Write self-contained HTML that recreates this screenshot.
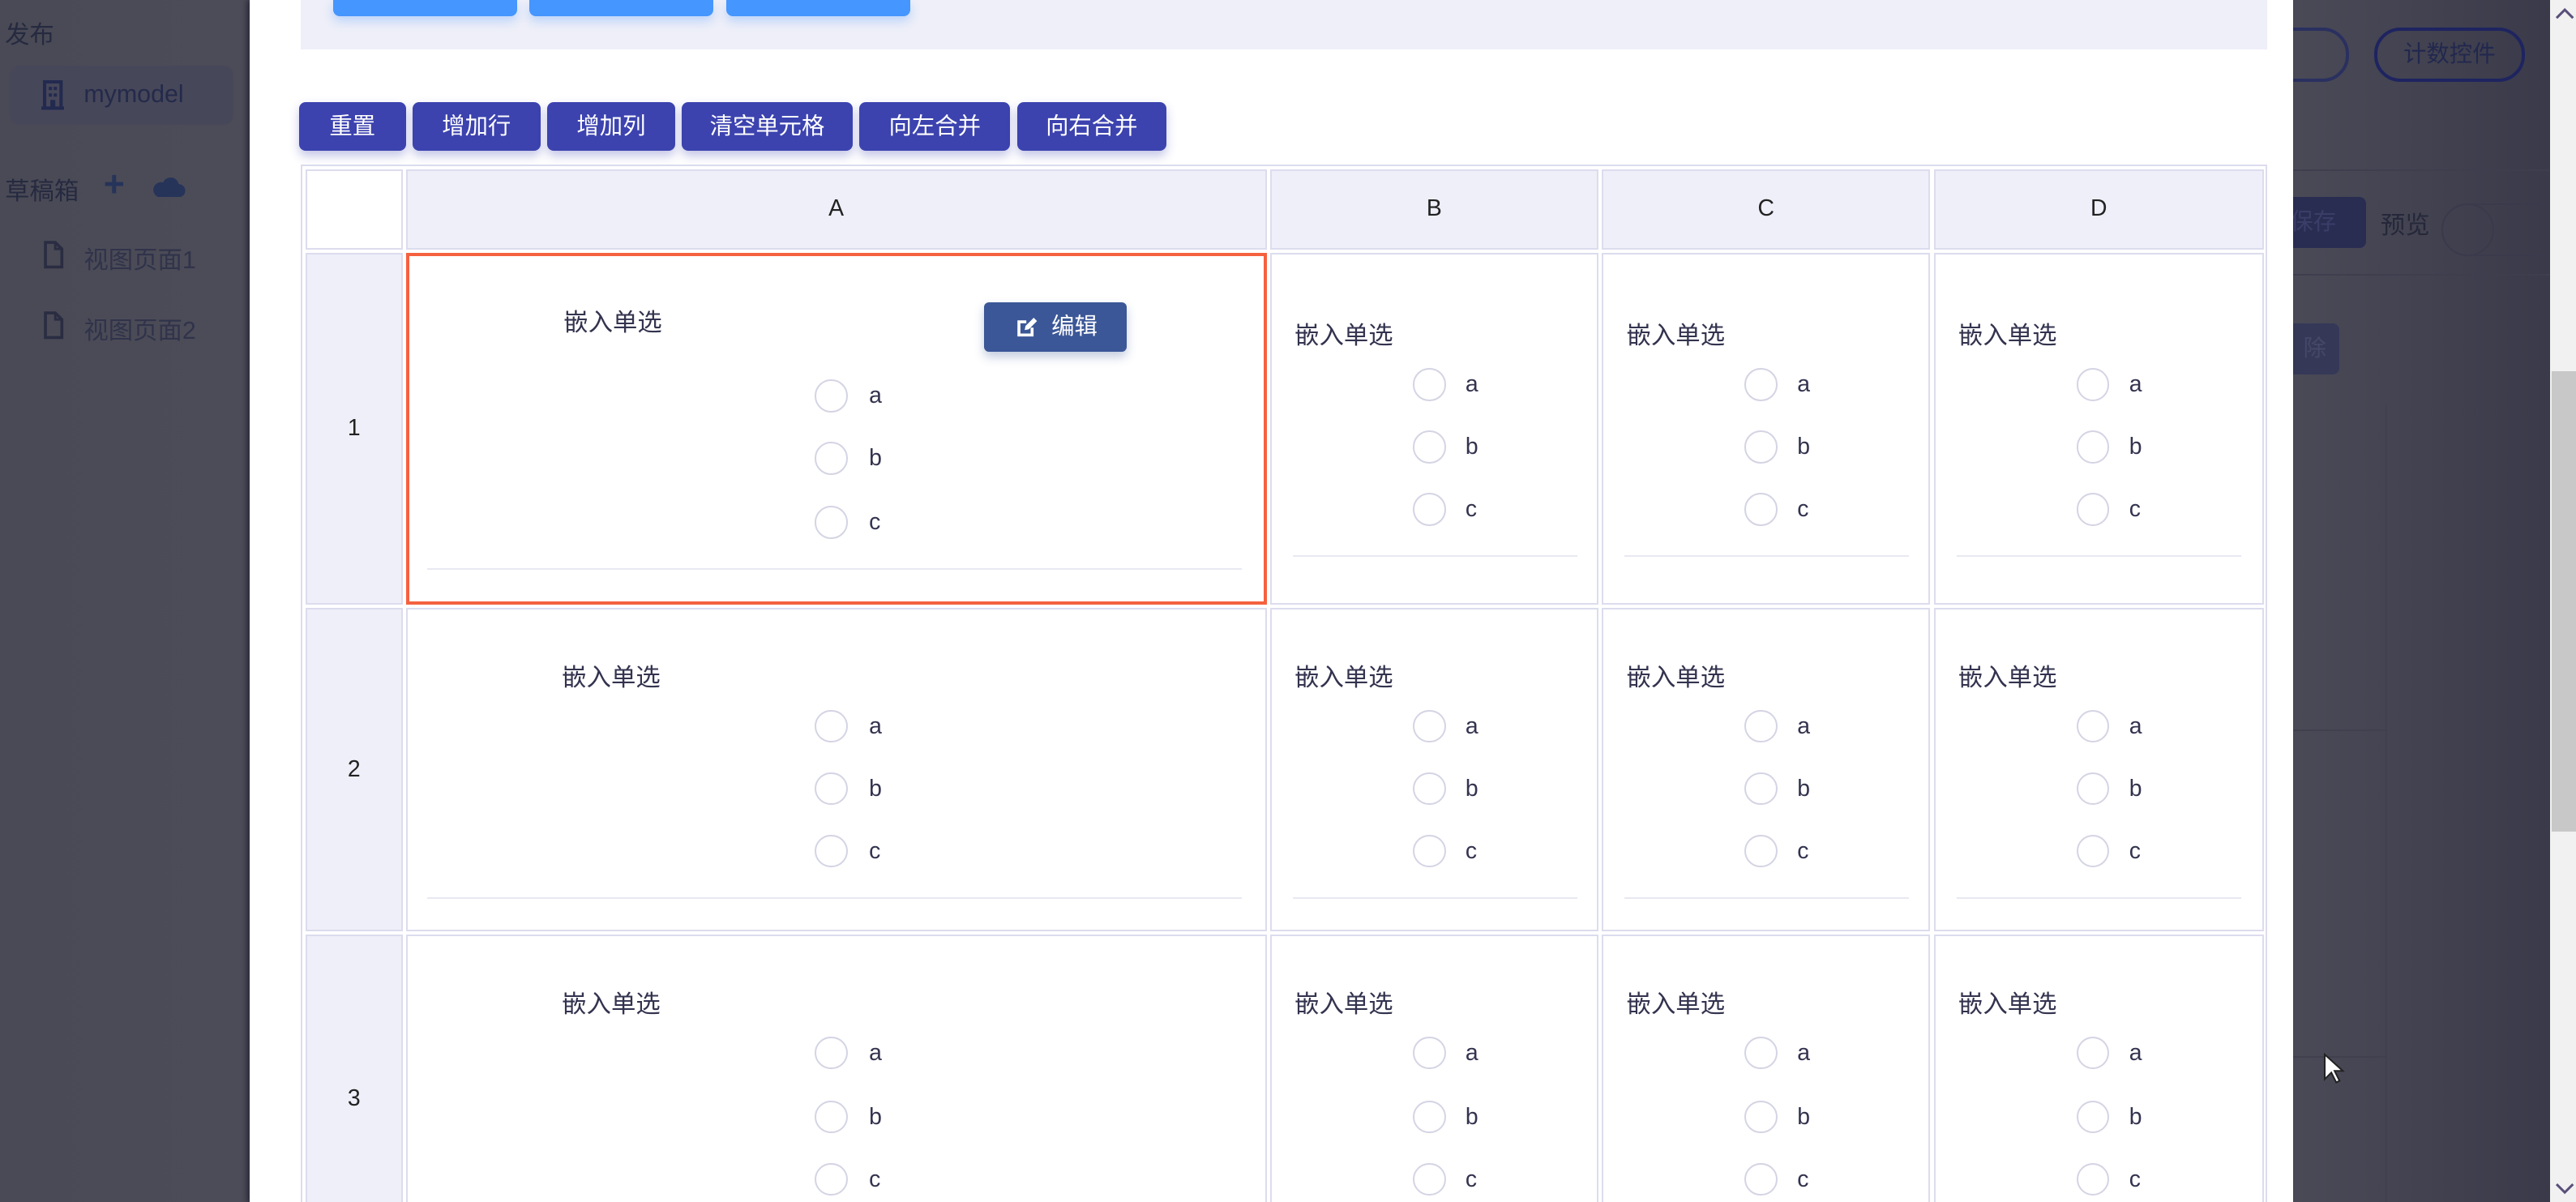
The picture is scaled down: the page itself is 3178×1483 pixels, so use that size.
<!DOCTYPE html>
<html><head><meta charset="utf-8">
<style>
html,body{margin:0;padding:0;overflow:hidden}
body{width:3178px;height:1483px;position:relative;background:#474753;font-family:"Liberation Sans","Noto Sans CJK SC",sans-serif}
#z{position:absolute;left:0;top:0;width:1568px;height:731.6px;zoom:2.02679;overflow:hidden}
.a{position:absolute}
.side{left:0;top:0;width:152px;height:732px;background:linear-gradient(90deg,#4a4a56,#4c4c58)}
.dt{color:#262a40;font-size:15px}
.right{left:1396px;top:0;width:156px;height:732px;background:linear-gradient(90deg,#4a4a57,#3a3a4a)}
.sb{left:1552px;top:0;width:16px;height:732px;background:#f1f1f1}
.modal{left:152px;top:0;width:1244px;height:732px;background:#fff;box-shadow:-2px 0 3px rgba(20,20,40,.6)}
.tb{height:30px;top:62px;background:#3c43af;color:#fff;font-size:14px;line-height:30px;text-align:center;border-radius:4px;box-shadow:0 3px 6px rgba(60,67,175,.3)}
.hd{background:#eeeff8;border:1px solid #dcdcee;box-sizing:border-box;font-size:14px;color:#222;text-align:center;line-height:46px}
.cl{background:#fff;border:1px solid #dcdcee;box-sizing:border-box}
.ti{font-size:15px;color:#33334f;margin-top:-2px}
.r{width:20px;height:20px;border:1px solid #d4d4e4;border-radius:50%;box-sizing:border-box}
.l{font-size:14px;color:#33334f;margin-top:1px}
.ln{height:1px;background:#e8e8f2}
</style></head><body><div id="z">
<div class="a side"></div>
<div class="a dt" style="left:3px;top:9px">发布</div>
<div class="a" style="left:6px;top:40px;width:136px;height:36px;background:#47475a;border-radius:6px"></div>
<svg class="a" style="left:25px;top:49px" width="14" height="18" viewBox="0 0 14 18"><rect x="2" y="1" width="10" height="16" fill="none" stroke="#222a50" stroke-width="2"/><rect x="0" y="16" width="14" height="2" fill="#222a50"/><g fill="#222a50"><rect x="4.5" y="4" width="2" height="2"/><rect x="7.5" y="4" width="2" height="2"/><rect x="4.5" y="8" width="2" height="2"/><rect x="7.5" y="8" width="2" height="2"/><rect x="5.5" y="12" width="3" height="5"/></g></svg>
<div class="a" style="left:51px;top:49px;font-size:15px;color:#242a4a">mymodel</div>
<div class="a dt" style="left:3px;top:104px">草稿箱</div>
<div class="a" style="left:63px;top:100px;color:#26345a;font-size:22px;font-weight:bold">+</div>
<svg class="a" style="left:93px;top:106px" width="20" height="14" viewBox="0 0 20 14"><path d="M4 14h12a4 4 0 0 0 0-8 5 5 0 0 0-9.5-1A4.5 4.5 0 0 0 4 14z" fill="#26345a"/></svg>
<svg class="a" style="left:26px;top:146px" width="13" height="18" viewBox="0 0 13 18"><path d="M1.5 1.5h6l4 4v11h-10z" fill="none" stroke="#2a2d42" stroke-width="1.8"/><path d="M7.5 1.5v4h4" fill="none" stroke="#2a2d42" stroke-width="1.5"/></svg>
<div class="a" style="left:51px;top:146px;font-size:15px;color:#30334a">视图页面1</div>
<svg class="a" style="left:26px;top:189px" width="13" height="18" viewBox="0 0 13 18"><path d="M1.5 1.5h6l4 4v11h-10z" fill="none" stroke="#2a2d42" stroke-width="1.8"/><path d="M7.5 1.5v4h4" fill="none" stroke="#2a2d42" stroke-width="1.5"/></svg>
<div class="a" style="left:51px;top:189px;font-size:15px;color:#30334a">视图页面2</div>

<div class="a right"></div>
<div class="a" style="left:1380px;top:17px;width:46px;height:29px;border:2px solid #2a3060;border-radius:16px"></div>
<div class="a" style="left:1445px;top:17px;width:88px;height:29px;border:2px solid #1e2460;border-radius:16px;color:#22284e;font-size:14px;text-align:center;line-height:29px">计数控件</div>
<div class="a" style="left:1396px;top:103px;width:156px;height:1px;background:#3e3e4e"></div>
<div class="a" style="left:1380px;top:120px;width:60px;height:31px;background:#2a2d52;border-radius:4px;color:#3a3e68;font-size:14px;line-height:31px;text-align:right"><span style="margin-right:18px">保存</span></div>
<div class="a" style="left:1449px;top:125px;font-size:15px;color:#25283a">预览</div>
<div class="a" style="left:1486px;top:124px;width:80px;height:30px;border:1px solid #3a3a4c;border-radius:16px"></div>
<div class="a" style="left:1486px;top:124px;width:30px;height:30px;border:1px solid #3a3a4c;border-radius:50%"></div>
<div class="a" style="left:1396px;top:167px;width:156px;height:1px;background:#3e3e4e"></div>
<div class="a" style="left:1380px;top:197px;width:44px;height:31px;background:#353857;border-radius:4px;color:#454968;font-size:14px;line-height:31px;text-align:right"><span style="margin-right:8px">除</span></div>
<div class="a" style="left:1396px;top:246px;width:56px;height:486px;border-right:1px solid #40404e"></div>
<div class="a" style="left:1396px;top:444px;width:56px;height:1px;background:#40404e"></div>
<div class="a" style="left:1396px;top:643px;width:56px;height:1px;background:#40404e"></div>
<svg class="a" style="left:1414px;top:641px" width="14" height="20" viewBox="0 0 14 20"><path d="M1 1v15l4-4 3 6 2-1-3-6h5z" fill="#fff" stroke="#222" stroke-width="1"/></svg>

<div class="a sb"></div>
<div class="a" style="left:1553px;top:226px;width:15px;height:280px;background:#c8c8c8"></div>
<svg class="a" style="left:1555px;top:4px" width="12" height="8"><path d="M1 7l5-5 5 5" fill="none" stroke="#5a4f7a" stroke-width="1.5"/></svg>
<svg class="a" style="left:1555px;top:720px" width="12" height="8"><path d="M1 1l5 5 5-5" fill="none" stroke="#5a4f7a" stroke-width="1.5"/></svg>

<div class="a modal"></div>
<div class="a" style="left:183px;top:0;width:1197px;height:30px;background:#eeeff8"></div>
<div class="a" style="left:203px;top:0;width:112px;height:10px;background:#4596ff;border-radius:0 0 4px 4px;box-shadow:0 3px 6px rgba(69,150,255,.3)"></div>
<div class="a" style="left:322px;top:0;width:112px;height:10px;background:#4596ff;border-radius:0 0 4px 4px;box-shadow:0 3px 6px rgba(69,150,255,.3)"></div>
<div class="a" style="left:442px;top:0;width:112px;height:10px;background:#4596ff;border-radius:0 0 4px 4px;box-shadow:0 3px 6px rgba(69,150,255,.3)"></div>

<div class="a tb" style="left:182px;width:65px">重置</div>
<div class="a tb" style="left:251px;width:78px">增加行</div>
<div class="a tb" style="left:333px;width:78px">增加列</div>
<div class="a tb" style="left:415px;width:104px">清空单元格</div>
<div class="a tb" style="left:523px;width:92px">向左合并</div>
<div class="a tb" style="left:619px;width:91px">向右合并</div>

<div class="a" style="left:183px;top:100px;width:1197px;height:640px;border:1px solid #dcdcee;box-sizing:border-box"></div>
<div class="a cl" style="left:186px;top:103px;width:59px;height:49px"></div>
<div class="a hd" style="left:247px;top:103px;width:524px;height:49px">A</div>
<div class="a hd" style="left:773px;top:103px;width:200px;height:49px">B</div>
<div class="a hd" style="left:975px;top:103px;width:200px;height:49px">C</div>
<div class="a hd" style="left:1177px;top:103px;width:201px;height:49px">D</div>

<div class="a hd" style="left:186px;top:154px;width:59px;height:214px;line-height:212px">1</div>
<div class="a hd" style="left:186px;top:370px;width:59px;height:197px;line-height:195px">2</div>
<div class="a hd" style="left:186px;top:569px;width:59px;height:200px;line-height:198px">3</div>

<!-- row1 -->
<div class="a cl" style="left:247px;top:154px;width:524px;height:214px;border:2px solid #f5613f"></div>
<div class="a ti" style="left:343px;top:186px">嵌入单选</div>
<div class="a" style="left:599px;top:184px;width:87px;height:30px;background:#3b5797;border-radius:3px;color:#fff;font-size:14px;line-height:30px;box-shadow:0 3px 6px rgba(59,87,151,.3)"><svg style="position:absolute;left:19px;top:8px" width="14" height="14" viewBox="0 0 14 14"><path d="M10 7.5v4.5H2V4h4.5" fill="none" stroke="#fff" stroke-width="1.8"/><path d="M5.5 9l.5-2.5L11 1.5l2 2-5 5z" fill="#fff"/></svg><span style="position:absolute;left:41px">编辑</span></div>
<div class="a r" style="left:496px;top:231px"></div><div class="a l" style="left:529px;top:232px">a</div>
<div class="a r" style="left:496px;top:269px"></div><div class="a l" style="left:529px;top:270px">b</div>
<div class="a r" style="left:496px;top:308px"></div><div class="a l" style="left:529px;top:309px">c</div>
<div class="a ln" style="left:260px;top:346px;width:496px"></div>

<div class="a cl" style="left:773px;top:154px;width:200px;height:214px"></div>
<div class="a cl" style="left:975px;top:154px;width:200px;height:214px"></div>
<div class="a cl" style="left:1177px;top:154px;width:201px;height:214px"></div>

<div class="a ti" style="left:788px;top:194px">嵌入单选</div>
<div class="a r" style="left:860px;top:224px"></div><div class="a l" style="left:892px;top:225px">a</div>
<div class="a r" style="left:860px;top:262px"></div><div class="a l" style="left:892px;top:263px">b</div>
<div class="a r" style="left:860px;top:300px"></div><div class="a l" style="left:892px;top:301px">c</div>
<div class="a ln" style="left:787px;top:338px;width:173px"></div>

<div class="a ti" style="left:990px;top:194px">嵌入单选</div>
<div class="a r" style="left:1062px;top:224px"></div><div class="a l" style="left:1094px;top:225px">a</div>
<div class="a r" style="left:1062px;top:262px"></div><div class="a l" style="left:1094px;top:263px">b</div>
<div class="a r" style="left:1062px;top:300px"></div><div class="a l" style="left:1094px;top:301px">c</div>
<div class="a ln" style="left:989px;top:338px;width:173px"></div>

<div class="a ti" style="left:1192px;top:194px">嵌入单选</div>
<div class="a r" style="left:1264px;top:224px"></div><div class="a l" style="left:1296px;top:225px">a</div>
<div class="a r" style="left:1264px;top:262px"></div><div class="a l" style="left:1296px;top:263px">b</div>
<div class="a r" style="left:1264px;top:300px"></div><div class="a l" style="left:1296px;top:301px">c</div>
<div class="a ln" style="left:1191px;top:338px;width:173px"></div>

<!-- row2 -->
<div class="a cl" style="left:247px;top:370px;width:524px;height:197px"></div>
<div class="a cl" style="left:773px;top:370px;width:200px;height:197px"></div>
<div class="a cl" style="left:975px;top:370px;width:200px;height:197px"></div>
<div class="a cl" style="left:1177px;top:370px;width:201px;height:197px"></div>
<div class="a ti" style="left:342px;top:402px">嵌入单选</div>
<div class="a r" style="left:496px;top:432px"></div><div class="a l" style="left:529px;top:433px">a</div>
<div class="a r" style="left:496px;top:470px"></div><div class="a l" style="left:529px;top:471px">b</div>
<div class="a r" style="left:496px;top:508px"></div><div class="a l" style="left:529px;top:509px">c</div>
<div class="a ln" style="left:260px;top:546px;width:496px"></div>
<div class="a ti" style="left:788px;top:402px">嵌入单选</div>
<div class="a r" style="left:860px;top:432px"></div><div class="a l" style="left:892px;top:433px">a</div>
<div class="a r" style="left:860px;top:470px"></div><div class="a l" style="left:892px;top:471px">b</div>
<div class="a r" style="left:860px;top:508px"></div><div class="a l" style="left:892px;top:509px">c</div>
<div class="a ln" style="left:787px;top:546px;width:173px"></div>
<div class="a ti" style="left:990px;top:402px">嵌入单选</div>
<div class="a r" style="left:1062px;top:432px"></div><div class="a l" style="left:1094px;top:433px">a</div>
<div class="a r" style="left:1062px;top:470px"></div><div class="a l" style="left:1094px;top:471px">b</div>
<div class="a r" style="left:1062px;top:508px"></div><div class="a l" style="left:1094px;top:509px">c</div>
<div class="a ln" style="left:989px;top:546px;width:173px"></div>
<div class="a ti" style="left:1192px;top:402px">嵌入单选</div>
<div class="a r" style="left:1264px;top:432px"></div><div class="a l" style="left:1296px;top:433px">a</div>
<div class="a r" style="left:1264px;top:470px"></div><div class="a l" style="left:1296px;top:471px">b</div>
<div class="a r" style="left:1264px;top:508px"></div><div class="a l" style="left:1296px;top:509px">c</div>
<div class="a ln" style="left:1191px;top:546px;width:173px"></div>

<!-- row3 -->
<div class="a cl" style="left:247px;top:569px;width:524px;height:200px"></div>
<div class="a cl" style="left:773px;top:569px;width:200px;height:200px"></div>
<div class="a cl" style="left:975px;top:569px;width:200px;height:200px"></div>
<div class="a cl" style="left:1177px;top:569px;width:201px;height:200px"></div>
<div class="a ti" style="left:342px;top:601px">嵌入单选</div>
<div class="a r" style="left:496px;top:631px"></div><div class="a l" style="left:529px;top:632px">a</div>
<div class="a r" style="left:496px;top:670px"></div><div class="a l" style="left:529px;top:671px">b</div>
<div class="a r" style="left:496px;top:708px"></div><div class="a l" style="left:529px;top:709px">c</div>
<div class="a ti" style="left:788px;top:601px">嵌入单选</div>
<div class="a r" style="left:860px;top:631px"></div><div class="a l" style="left:892px;top:632px">a</div>
<div class="a r" style="left:860px;top:670px"></div><div class="a l" style="left:892px;top:671px">b</div>
<div class="a r" style="left:860px;top:708px"></div><div class="a l" style="left:892px;top:709px">c</div>
<div class="a ti" style="left:990px;top:601px">嵌入单选</div>
<div class="a r" style="left:1062px;top:631px"></div><div class="a l" style="left:1094px;top:632px">a</div>
<div class="a r" style="left:1062px;top:670px"></div><div class="a l" style="left:1094px;top:671px">b</div>
<div class="a r" style="left:1062px;top:708px"></div><div class="a l" style="left:1094px;top:709px">c</div>
<div class="a ti" style="left:1192px;top:601px">嵌入单选</div>
<div class="a r" style="left:1264px;top:631px"></div><div class="a l" style="left:1296px;top:632px">a</div>
<div class="a r" style="left:1264px;top:670px"></div><div class="a l" style="left:1296px;top:671px">b</div>
<div class="a r" style="left:1264px;top:708px"></div><div class="a l" style="left:1296px;top:709px">c</div>
</div></body></html>
